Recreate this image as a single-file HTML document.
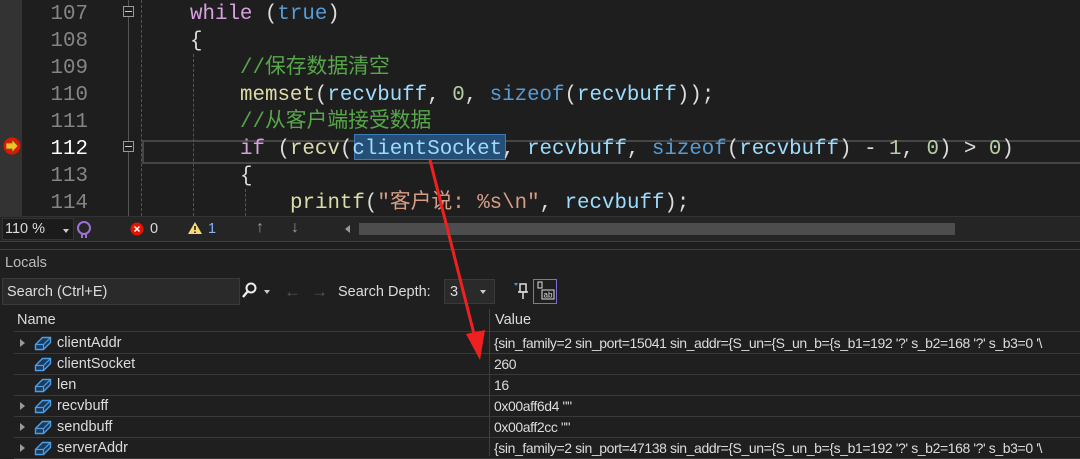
<!DOCTYPE html>
<html><head><meta charset="utf-8"><style>
*{margin:0;padding:0;box-sizing:border-box}
body{width:1080px;height:456px;overflow:hidden;background:#1e1e1e;position:relative;font-family:"Liberation Sans","Noto Sans CJK SC",sans-serif}
.a{position:absolute;white-space:nowrap}
.code{font-family:"Liberation Mono","Noto Sans CJK SC",monospace;font-size:20.8px;line-height:27px;color:#dcdcdc}
.ln{color:#858585;width:88px;text-align:right;left:0}
.k{color:#d8a0df}.b{color:#569cd6}.c{color:#57a64a}.f{color:#dcdcaa}.v{color:#9cdcfe}.n{color:#b5cea8}.s{color:#d69d85}
.ui{font-size:14.5px;color:#dcdcdc}
.row{position:absolute;left:14px;right:0;height:21px;border-bottom:1px solid #3a3a3a}
.nm{position:absolute;left:43px;top:2px;font-size:14.5px;color:#dcdcdc}
.vl{position:absolute;left:480px;top:2px;font-size:14px;color:#dcdcdc;letter-spacing:-0.4px;white-space:nowrap}
.ic{position:absolute;left:20px;top:2px}
.tri{position:absolute;left:6px;top:6px;width:0;height:0;border-left:5px solid #999;border-top:4px solid transparent;border-bottom:4px solid transparent}
</style></head><body>
<div class="a" style="left:0;top:0;width:22px;height:216px;background:#333"></div>
<div class="a" style="left:142px;top:140px;width:938px;height:24px;border:2px solid #464646;border-right:none"></div>
<div class="a" style="left:128px;top:0;width:1px;height:216px;background:#555"></div>
<div class="a" style="left:123px;top:6px;width:11px;height:11px;border:1px solid #999;background:#1e1e1e"></div>
<div class="a" style="left:125px;top:11px;width:7px;height:1px;background:#ccc"></div>
<div class="a" style="left:123px;top:141px;width:11px;height:11px;border:1px solid #999;background:#1e1e1e"></div>
<div class="a" style="left:125px;top:146px;width:7px;height:1px;background:#ccc"></div>
<div class="a" style="left:141px;top:0;height:216px;border-left:1px dashed #555"></div>
<div class="a" style="left:193px;top:54px;height:162px;border-left:1px dashed #555"></div>
<div class="a" style="left:245px;top:189px;height:27px;border-left:1px dashed #555"></div>
<svg class="a" style="left:2px;top:136px" width="22" height="20"><circle cx="10" cy="10" r="8.5" fill="#e51400"/><path d="M4 7h6V3.5l6 6.5-6 6.5V13H4z" fill="#f5c02e" stroke="#7a5200" stroke-width=".8"/></svg>
<div class="a" style="left:354px;top:134px;width:152px;height:26px;background:#264f78;border:1px solid #3d7ab8"></div>
<div class="a code" style="left:0;top:1px">
<div class="ln a" style="top:0">107</div><div class="ln a" style="top:27px">108</div><div class="ln a" style="top:54px">109</div><div class="ln a" style="top:81px">110</div><div class="ln a" style="top:108px">111</div><div class="ln a" style="top:135px;color:#fff">112</div><div class="ln a" style="top:162px">113</div><div class="ln a" style="top:189px">114</div>
<div class="a" style="left:190px;top:0"><span class="k">while</span> (<span class="b">true</span>)</div>
<div class="a" style="left:190px;top:27px">{</div>
<div class="a c" style="left:240px;top:54px">//保存数据清空</div>
<div class="a" style="left:240px;top:81px"><span class="f">memset</span>(<span class="v">recvbuff</span>, <span class="n">0</span>, <span class="b">sizeof</span>(<span class="v">recvbuff</span>));</div>
<div class="a c" style="left:240px;top:108px">//从客户端接受数据</div>
<div class="a" style="left:240px;top:135px"><span class="k">if</span> (<span class="f">recv</span>(<span class="v">clientSocket</span>, <span class="v">recvbuff</span>, <span class="b">sizeof</span>(<span class="v">recvbuff</span>) - <span class="n">1</span>, <span class="n">0</span>) &gt; <span class="n">0</span>)</div>
<div class="a" style="left:240px;top:162px">{</div>
<div class="a" style="left:290px;top:189px"><span class="f">printf</span>(<span class="s">"客户说: %s\n"</span>, <span class="v">recvbuff</span>);</div>
</div>
<div class="a" style="left:0;top:216px;width:1080px;height:26px;background:#252526;border-top:1px solid #333;border-bottom:1px solid #3f3f3f"></div>
<div class="a" style="left:2px;top:218px;width:72px;height:22px;background:#1b1b1c;border:1px solid #333"></div>
<div class="a ui" style="left:5px;top:221px">110 %</div>
<div class="a" style="left:63px;top:229px;border-top:4px solid #ccc;border-left:3px solid transparent;border-right:3px solid transparent"></div>
<svg class="a" style="left:76px;top:220px" width="16" height="18"><circle cx="8" cy="8" r="6" fill="none" stroke="#9b6fd6" stroke-width="2"/><path d="M6 14v4M10 14v4" stroke="#9b6fd6" stroke-width="2"/></svg>
<svg class="a" style="left:130px;top:222px" width="14" height="14"><circle cx="7" cy="7" r="6.5" fill="#e51400"/><path d="M4.5 4.5l5 5M9.5 4.5l-5 5" stroke="#fff" stroke-width="1.5"/></svg>
<div class="a ui" style="left:150px;top:221px">0</div>
<svg class="a" style="left:187px;top:221px" width="16" height="14"><path d="M8 1L15 13H1z" fill="#f8d775"/><path d="M8 5v4M8 10.5v1.5" stroke="#1e1e1e" stroke-width="1.6"/></svg>
<div class="a ui" style="left:208px;top:221px;color:#8ab4f8">1</div>
<div class="a ui" style="left:256px;top:219px;color:#999;font-size:16px">↑</div>
<div class="a ui" style="left:291px;top:219px;color:#999;font-size:16px">↓</div>
<div class="a" style="left:345px;top:225px;border-right:5px solid #999;border-top:4px solid transparent;border-bottom:4px solid transparent"></div>
<div class="a" style="left:359px;top:223px;width:596px;height:12px;background:#4d4d4d"></div>
<div class="a" style="left:0;top:249px;width:1080px;height:207px;background:#1f1f1f;border-top:1px solid #3f3f3f"></div>
<div class="a ui" style="left:5px;top:255px;color:#bbb">Locals</div>
<div class="a" style="left:2px;top:278px;width:238px;height:27px;background:#2a2a2a;border:1px solid #3a3a3a"></div>
<div class="a ui" style="left:7px;top:284px;color:#ddd">Search (Ctrl+E)</div>
<svg class="a" style="left:241px;top:282px" width="18" height="18"><circle cx="10" cy="6" r="4.5" fill="none" stroke="#eee" stroke-width="2"/><path d="M7 9l-5 6" stroke="#eee" stroke-width="2.4"/></svg>
<div class="a" style="left:264px;top:290px;border-top:4px solid #ccc;border-left:3px solid transparent;border-right:3px solid transparent"></div>
<div class="a ui" style="left:284px;top:282px;color:#555;font-size:17px">←</div>
<div class="a ui" style="left:311px;top:282px;color:#555;font-size:17px">→</div>
<div class="a ui" style="left:338px;top:284px">Search Depth:</div>
<div class="a" style="left:444px;top:279px;width:51px;height:25px;background:#2a2a2a;border:1px solid #3a3a3a"></div>
<div class="a ui" style="left:450px;top:284px">3</div>
<div class="a" style="left:480px;top:290px;border-top:4px solid #ccc;border-left:3px solid transparent;border-right:3px solid transparent"></div>
<svg class="a" style="left:512px;top:281px" width="20" height="20"><path d="M2 2h4l-2 3z" fill="#3e9be0"/><rect x="8" y="3" width="6" height="8" fill="none" stroke="#ddd" stroke-width="1.5"/><path d="M6 11h10M11 11v7" stroke="#ddd" stroke-width="1.5"/></svg>
<div class="a" style="left:533px;top:279px;width:24px;height:25px;border:1px solid #7a6fd6"></div>
<svg class="a" style="left:536px;top:281px" width="20" height="20"><rect x="2" y="1" width="4" height="6" fill="none" stroke="#ddd"/><rect x="6" y="9" width="12" height="9" fill="none" stroke="#ddd"/><text x="7.5" y="16.5" font-size="8" fill="#ddd" font-family="Liberation Sans">ab</text></svg>
<div class="a" style="left:14px;top:309px;width:1066px;height:23px;background:#1f1f1f;border-bottom:1px solid #3a3a3a"></div>
<div class="a ui" style="left:17px;top:312px">Name</div>
<div class="a" style="left:489px;top:309px;width:1px;height:147px;background:#3f3f3f"></div>
<div class="a ui" style="left:495px;top:312px">Value</div>
<div class="a" style="left:0;top:333px;width:1080px;height:123px">
<div class="row" style="top:0"><div class="tri"></div><svg class="ic" width="18" height="17"><path d="M1.5 9.5l7-7h8v5l-7 7h-8z" fill="#1b3a5c" stroke="#4a9fe8" stroke-width="1.4"/><path d="M1.5 9.5h8v5M9.5 9.5l7-7" stroke="#4a9fe8" stroke-width="1.2" fill="none"/></svg><div class="nm">clientAddr</div><div class="vl">{sin_family=2 sin_port=15041 sin_addr={S_un={S_un_b={s_b1=192 '?' s_b2=168 '?' s_b3=0 '\</div></div>
<div class="row" style="top:21px"><svg class="ic" width="18" height="17"><path d="M1.5 9.5l7-7h8v5l-7 7h-8z" fill="#1b3a5c" stroke="#4a9fe8" stroke-width="1.4"/><path d="M1.5 9.5h8v5M9.5 9.5l7-7" stroke="#4a9fe8" stroke-width="1.2" fill="none"/></svg><div class="nm">clientSocket</div><div class="vl">260</div></div>
<div class="row" style="top:42px"><svg class="ic" width="18" height="17"><path d="M1.5 9.5l7-7h8v5l-7 7h-8z" fill="#1b3a5c" stroke="#4a9fe8" stroke-width="1.4"/><path d="M1.5 9.5h8v5M9.5 9.5l7-7" stroke="#4a9fe8" stroke-width="1.2" fill="none"/></svg><div class="nm">len</div><div class="vl">16</div></div>
<div class="row" style="top:63px"><div class="tri"></div><svg class="ic" width="18" height="17"><path d="M1.5 9.5l7-7h8v5l-7 7h-8z" fill="#1b3a5c" stroke="#4a9fe8" stroke-width="1.4"/><path d="M1.5 9.5h8v5M9.5 9.5l7-7" stroke="#4a9fe8" stroke-width="1.2" fill="none"/></svg><div class="nm">recvbuff</div><div class="vl">0x00aff6d4 ""</div></div>
<div class="row" style="top:84px"><div class="tri"></div><svg class="ic" width="18" height="17"><path d="M1.5 9.5l7-7h8v5l-7 7h-8z" fill="#1b3a5c" stroke="#4a9fe8" stroke-width="1.4"/><path d="M1.5 9.5h8v5M9.5 9.5l7-7" stroke="#4a9fe8" stroke-width="1.2" fill="none"/></svg><div class="nm">sendbuff</div><div class="vl">0x00aff2cc ""</div></div>
<div class="row" style="top:105px"><div class="tri"></div><svg class="ic" width="18" height="17"><path d="M1.5 9.5l7-7h8v5l-7 7h-8z" fill="#1b3a5c" stroke="#4a9fe8" stroke-width="1.4"/><path d="M1.5 9.5h8v5M9.5 9.5l7-7" stroke="#4a9fe8" stroke-width="1.2" fill="none"/></svg><div class="nm">serverAddr</div><div class="vl">{sin_family=2 sin_port=47138 sin_addr={S_un={S_un_b={s_b1=192 '?' s_b2=168 '?' s_b3=0 '\</div></div>
</div>
<svg class="a" style="left:0;top:0" width="1080" height="456"><path d="M430 160L475 338" stroke="#f02020" stroke-width="3"/><path d="M466 334L480 360L485 330z" fill="#f02020"/></svg>
</body></html>
